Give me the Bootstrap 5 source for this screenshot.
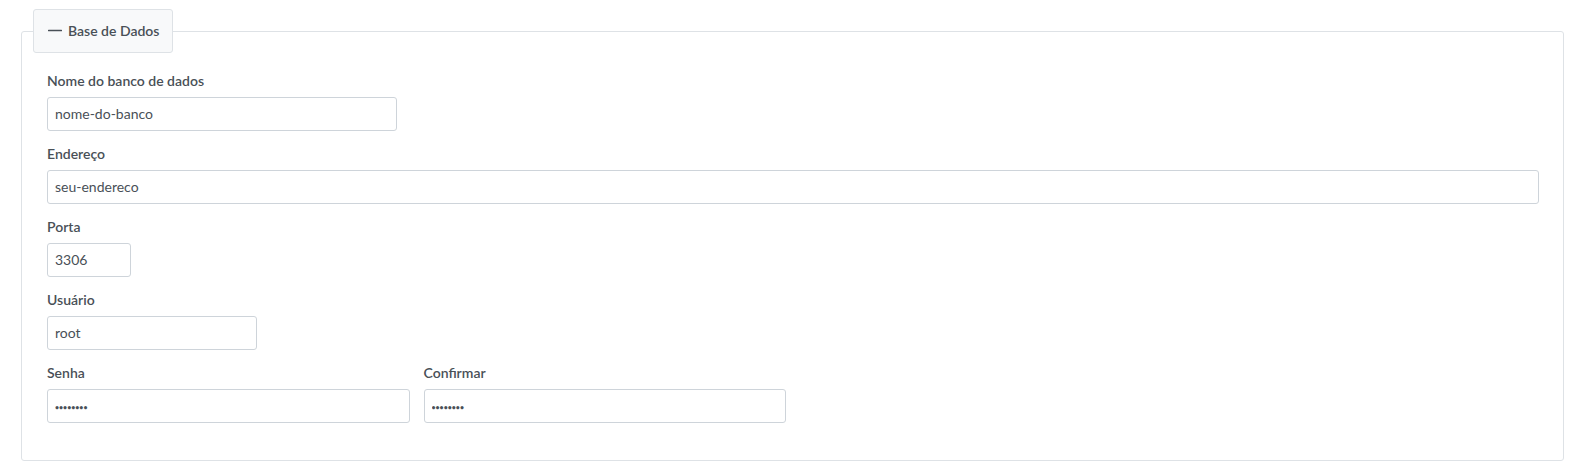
<!DOCTYPE html>
<html lang="pt-BR">
<head>
<meta charset="utf-8">
<meta name="viewport" content="width=device-width, initial-scale=1">
<title>Base de Dados</title>
<link href="https://cdn.jsdelivr.net/npm/bootstrap@5.3.0/dist/css/bootstrap.min.css" rel="stylesheet">
<style>
body { font-family: Lato, "Open Sans", sans-serif; font-size: 14px; line-height: 19px; color: #495057; background: #fff; }
.page { padding: 9px 13px 9px 21px; }
.panel { border: 1px solid #dee2e6; border-radius: 3px; padding: 0 24px 37px 25px; }
.panel-title { float: none; width: auto; margin: 0 0 18px -14px; padding: 0; font-size: 14px; line-height: 19px; }
.toggle { display: flex; align-items: center; gap: 6px; height: 44px; padding: 0 13px 0 14px; border: 1px solid #dee2e6; border-radius: 3px; background: #f8f9fa; color: #495057; font-weight: 600; }
.toggle span { padding-bottom: 2px; }
.fields { display: grid; gap: 13px; }
.form-label { display: block; margin-bottom: 7px; font-weight: 600; }
.form-control { height: 34px; padding: 0 7px 2px; font-size: 14px; line-height: 19px; color: #495057; border-color: #ced4da; border-radius: 3px; }
.form-control[type="password"] { padding: 2px 7px 0; font-size: 7px; font-weight: 700; }
.w-name { max-width: 350px; }
.w-port { max-width: 84px; }
.w-user { max-width: 210px; }
.pair { --bs-gutter-x: 14px; }
</style>
</head>
<body>
<main class="page">
<form>
<fieldset class="panel">
<legend class="panel-title">
<button type="button" class="toggle" aria-expanded="true" aria-controls="fields"><svg width="14" height="14" viewBox="0 0 14 14" aria-hidden="true"><path d="M.6 6.5h12.8" stroke="#495057" stroke-width="1.4" stroke-linecap="round"/></svg><span>Base de Dados</span></button>
</legend>
<div class="fields" id="fields">
<div><label class="form-label" for="name">Nome do banco de dados</label><input class="form-control w-name" id="name" type="text" value="nome-do-banco"></div>
<div><label class="form-label" for="host">Endereço</label><input class="form-control" id="host" type="text" value="seu-endereco"></div>
<div><label class="form-label" for="port">Porta</label><input class="form-control w-port" id="port" type="text" inputmode="numeric" value="3306"></div>
<div><label class="form-label" for="user">Usuário</label><input class="form-control w-user" id="user" type="text" value="root"></div>
<div class="row pair">
<div class="col-6 col-md-3"><label class="form-label" for="pass">Senha</label><input class="form-control" id="pass" type="password" value="password"></div>
<div class="col-6 col-md-3"><label class="form-label" for="confirm">Confirmar</label><input class="form-control" id="confirm" type="password" value="password"></div>
</div>
</div>
</fieldset>
</form>
</main>
<script src="https://cdn.jsdelivr.net/npm/bootstrap@5.3.0/dist/js/bootstrap.bundle.min.js"></script>
</body>
</html>
